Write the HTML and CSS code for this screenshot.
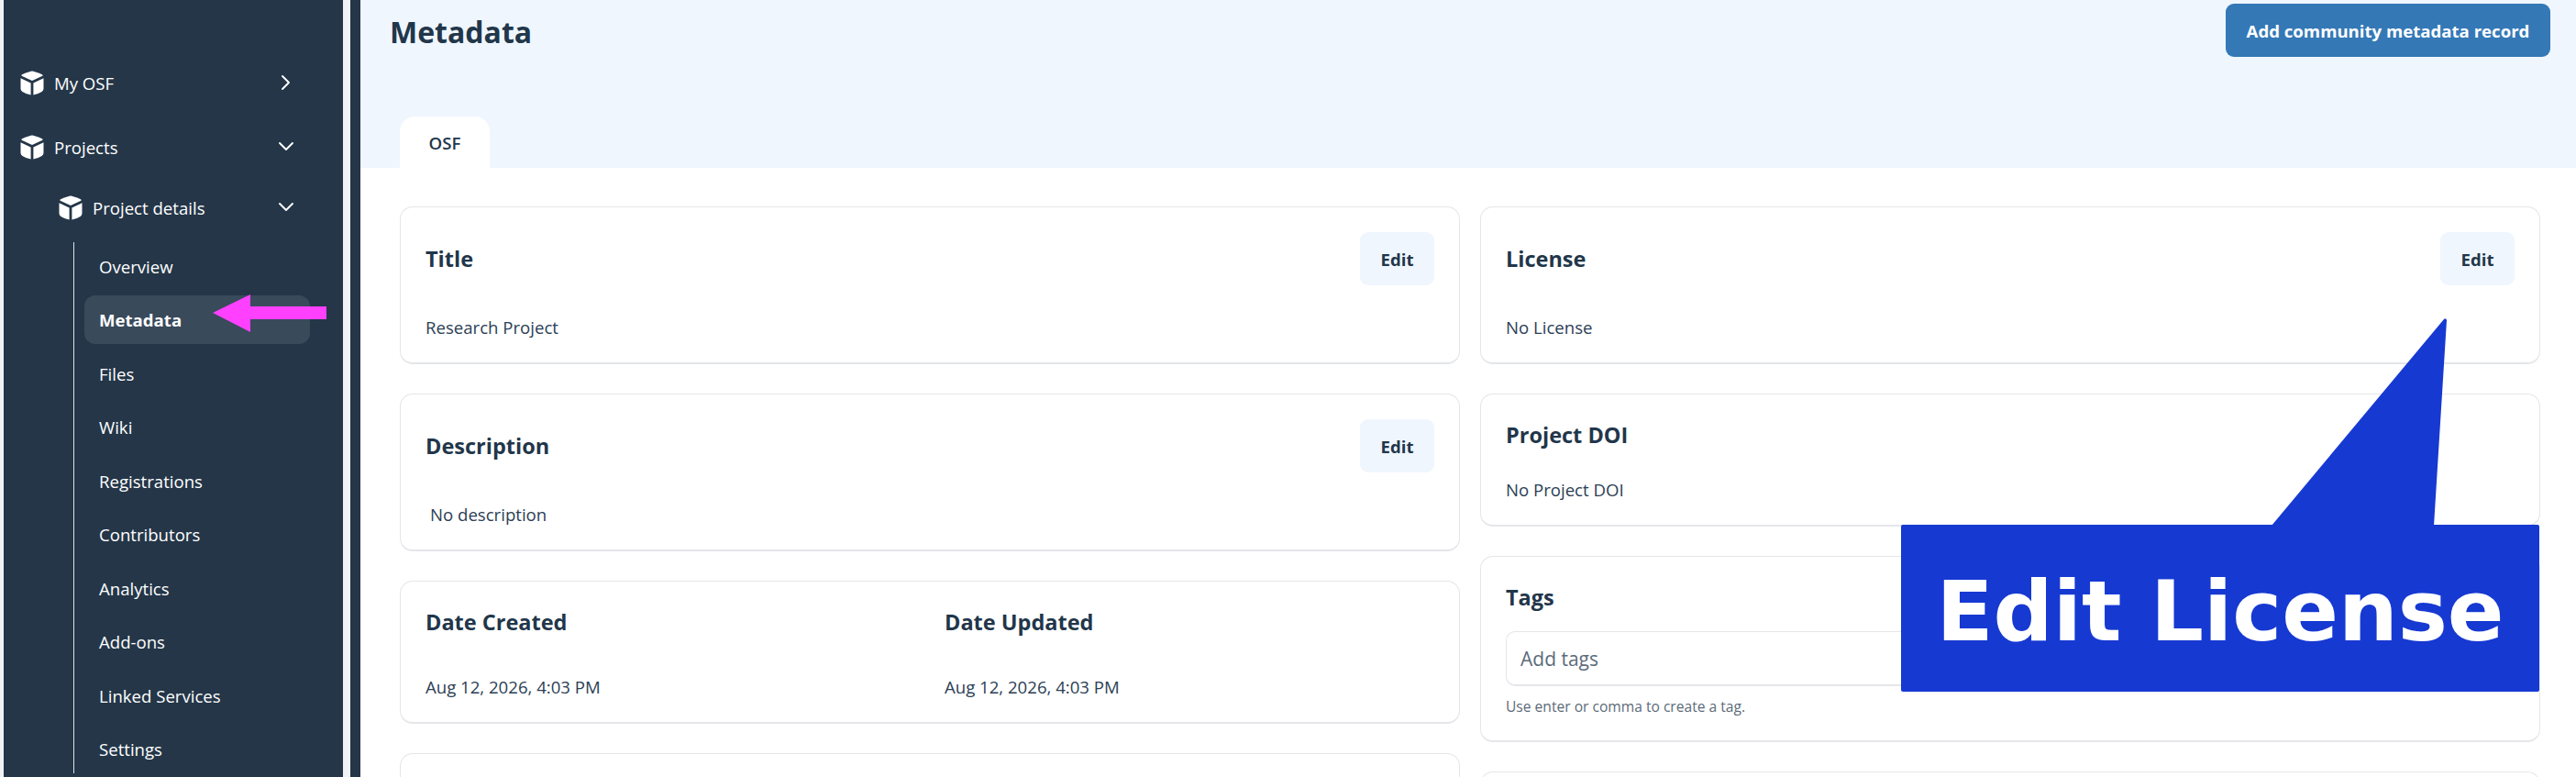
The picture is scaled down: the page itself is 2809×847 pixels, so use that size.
FILE: index.html
```html
<!DOCTYPE html>
<html lang="en">
  <head>
    <meta charset="UTF-8" />
    <meta name="viewport" content="width=device-width, initial-scale=1.0" />
    <title>Metadata</title>
    <link rel="stylesheet" href="styles.css">
  </head>
  <body>
    <svg width="0" height="0" class="defs">
      <symbol id="cube" viewBox="0 0 26 27">
        <path d="M13 0.5 Q15 0.5 24 4.2 Q25.2 5 24.4 5.8 L13 11 L1.6 5.8 Q0.8 5 2 4.2 Q11 0.5 13 0.5 Z" />
        <path d="M0.5 8.2 L11.6 13.4 V26.6 Q6 25.4 2.4 23 Q0.5 21.8 0.5 19.8 Z" />
        <path d="M25.5 8.2 L14.4 13.4 V26.6 Q20 25.4 23.6 23 Q25.5 21.8 25.5 19.8 Z" />
      </symbol>
    </svg>

    <div class="app">
      <nav class="sidebar">
        <div class="nav-item">
          <svg class="cube"><use href="#cube" /></svg>
          <span class="nav-label">My OSF</span>
          <svg class="chevron" viewBox="0 0 20 20"><path d="M6 3 L13 10 L6 17" /></svg>
        </div>
        <div class="nav-item projects">
          <svg class="cube"><use href="#cube" /></svg>
          <span class="nav-label">Projects</span>
          <svg class="chevron" viewBox="0 0 20 20"><path d="M3 6 L10 13 L17 6" /></svg>
        </div>
        <div class="nav-item details">
          <svg class="cube"><use href="#cube" /></svg>
          <span class="nav-label">Project details</span>
          <svg class="chevron" viewBox="0 0 20 20"><path d="M3 6 L10 13 L17 6" /></svg>
        </div>
        <ul class="sub-nav">
          <li>Overview</li>
          <li class="active">Metadata</li>
          <li>Files</li>
          <li>Wiki</li>
          <li>Registrations</li>
          <li>Contributors</li>
          <li>Analytics</li>
          <li>Add-ons</li>
          <li>Linked Services</li>
          <li>Settings</li>
        </ul>
      </nav>
      <div class="gutter"></div>
      <div class="rail"></div>

      <main class="main">
        <header class="page-header">
          <div class="header-row">
            <h1 class="page-title">Metadata</h1>
            <button class="btn-primary">Add community metadata record</button>
          </div>
          <div class="tab">OSF</div>
        </header>

        <div class="columns">
          <div class="column">
            <section class="card">
              <div class="card-head">
                <h2 class="card-title">Title</h2>
                <button class="btn-edit">Edit</button>
              </div>
              <p class="card-value">Research Project</p>
            </section>
            <section class="card">
              <div class="card-head">
                <h2 class="card-title">Description</h2>
                <button class="btn-edit">Edit</button>
              </div>
              <p class="card-value indented">No description</p>
            </section>
            <section class="card dates">
              <div>
                <h2 class="card-title">Date Created</h2>
                <p class="card-value">Aug 12, 2026, 4:03 PM</p>
              </div>
              <div>
                <h2 class="card-title">Date Updated</h2>
                <p class="card-value">Aug 12, 2026, 4:03 PM</p>
              </div>
            </section>
            <section class="card stub"></section>
          </div>

          <div class="column">
            <section class="card">
              <div class="card-head">
                <h2 class="card-title">License</h2>
                <button class="btn-edit">Edit</button>
              </div>
              <p class="card-value">No License</p>
            </section>
            <section class="card doi">
              <h2 class="card-title">Project DOI</h2>
              <p class="card-value">No Project DOI</p>
            </section>
            <section class="card tags">
              <h2 class="card-title">Tags</h2>
              <input class="tag-input" type="text" placeholder="Add tags" />
              <p class="hint">Use enter or comma to create a tag.</p>
            </section>
            <section class="card stub"></section>
          </div>
        </div>
      </main>
    </div>

    <!-- annotations drawn on top of the screenshot -->
    <svg class="arrow" viewBox="0 0 124 41"><path d="M0 20 L41 0 V13 H124 V27 H41 V41 Z" /></svg>
    <svg class="pointer" viewBox="0 0 192 226"><path d="M188 1 Q190 -1 191 2 L177 226 H0 Z" /></svg>
    <div class="callout">Edit License</div>
  </body>
</html>
```

FILE: styles.css
```css
* {
  box-sizing: border-box;
}
body {
  margin: 0;
  height: 847px;
  overflow: hidden;
  background-color: #fff;
  color: #22364a;
  font-family: "Open Sans", sans-serif;
}
h1,
h2,
p {
  margin: 0;
}
button {
  font-family: inherit;
  border: none;
}
.defs {
  display: none;
}
.app {
  display: flex;
  height: 847px;
  background-color: #f0f2f4;
  padding-left: 4px;
}

/* sidebar */
.sidebar {
  width: 370px;
  flex-shrink: 0;
  padding: 70px 52px 0 18px;
  background-color: #243648;
  color: #fff;
}
.nav-item {
  display: flex;
  align-items: center;
  height: 40px;
  font-size: 18.6px;
}
.nav-item.projects {
  margin-top: 30px;
}
.nav-item.details {
  margin-top: 26px;
  padding-left: 42px;
}
.cube {
  width: 26px;
  height: 27px;
  fill: #fff;
  flex-shrink: 0;
}
.nav-label {
  flex: 1;
  margin-left: 11px;
}
.chevron {
  width: 20px;
  height: 20px;
  fill: none;
  stroke: #fff;
  stroke-width: 1.9;
  stroke-linecap: round;
  stroke-linejoin: round;
}
.sub-nav {
  list-style: none;
  margin: 17.5px 0 0 58px;
  padding: 0 0 0 11px;
  border-left: 1px solid #dfe4e9;
  width: 258px;
}
.sub-nav li {
  display: flex;
  align-items: center;
  height: 53px;
  margin-bottom: 5.5px;
  padding-left: 16px;
  border-radius: 12px;
  font-size: 18.6px;
}
.sub-nav .active {
  background-color: #394a5b;
  font-weight: 700;
}
.gutter {
  width: 8px;
  flex-shrink: 0;
}
.rail {
  width: 11px;
  flex-shrink: 0;
  background-color: #243648;
}

/* page */
.main {
  flex: 1;
  min-width: 0;
  background-color: #fff;
}
.page-header {
  display: flex;
  flex-direction: column;
  justify-content: space-between;
  height: 183px;
  padding-top: 4px;
  background-color: #eff6fe;
}
.header-row {
  display: flex;
  justify-content: space-between;
  align-items: flex-start;
  padding: 0 28px 0 32px;
}
.page-title {
  font-size: 32px;
  line-height: 62px;
  font-weight: 700;
}
.btn-primary {
  width: 354px;
  height: 58px;
  background-color: #3478b6;
  color: #fff;
  border-radius: 9px;
  font-size: 18.6px;
  font-weight: 700;
}
.tab {
  display: flex;
  align-items: center;
  justify-content: center;
  width: 98px;
  height: 56px;
  margin-left: 43px;
  background-color: #fff;
  border-radius: 16px 16px 0 0;
  font-size: 18.6px;
  font-weight: 600;
}
.columns {
  display: flex;
  gap: 22px;
  padding: 42px 39px 0 43px;
}
.column {
  flex: 1;
  min-width: 0;
  display: flex;
  flex-direction: column;
  gap: 32px;
}
.card {
  padding: 27px 27px 26px;
  border: 1px solid #e4e6e9;
  border-bottom-width: 2px;
  border-radius: 14px;
  background-color: #fff;
}
.card-head {
  display: flex;
  justify-content: space-between;
  align-items: center;
  height: 58px;
  margin-bottom: 34px;
}
.card-title {
  font-size: 23.5px;
  line-height: 35px;
  font-weight: 700;
}
.card-value {
  font-size: 18.6px;
  line-height: 24px;
  color: #2c4055;
}
.indented {
  padding-left: 5px;
}
.btn-edit {
  width: 81px;
  height: 58px;
  background-color: #eff6fe;
  color: #22364a;
  border-radius: 9px;
  font-size: 18.6px;
  font-weight: 700;
}
.dates {
  display: grid;
  grid-template-columns: 566px 1fr;
}
.dates .card-value {
  margin-top: 41px;
}
.doi .card-value {
  margin-top: 30px;
}
.tag-input {
  display: block;
  width: 100%;
  height: 60px;
  margin-top: 19px;
  padding: 0 15px;
  border: 1px solid #e4e6e9;
  border-bottom-width: 2px;
  border-radius: 10px;
  font-family: inherit;
  font-size: 21px;
}
.tag-input::placeholder {
  color: #5c6b7a;
}
.hint {
  margin-top: 11px;
  font-size: 15.6px;
  line-height: 22px;
  color: #5c6b7a;
}
.stub {
  height: 120px;
}

/* annotations */
.arrow {
  position: absolute;
  left: 232px;
  top: 321px;
  width: 124px;
  height: 41px;
  fill: #ff40ff;
}
.pointer {
  position: absolute;
  left: 2477px;
  top: 347px;
  width: 192px;
  height: 226px;
  fill: #1639d2;
}
.callout {
  position: absolute;
  left: 2073px;
  top: 572px;
  width: 696px;
  height: 182px;
  padding-top: 7px;
  display: flex;
  align-items: center;
  justify-content: center;
  background-color: #1639d2;
  border-radius: 2px;
  color: #fff;
  font-family: "DejaVu Sans", sans-serif;
  font-size: 91px;
  font-weight: 700;
}
```
